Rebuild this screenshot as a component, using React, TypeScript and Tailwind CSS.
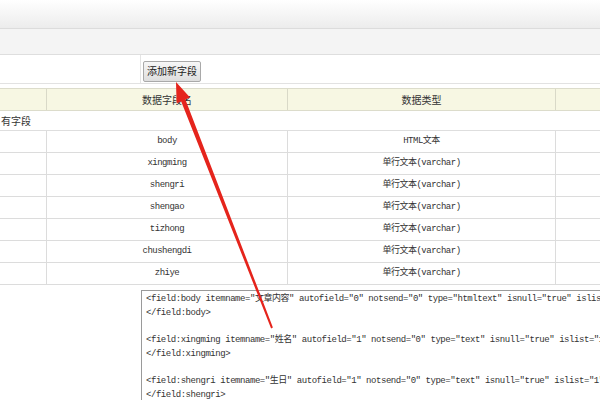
// Field list page — data field table with XML template textarea

const rows = [
    { name: 'body', type: 'HTML文本' },
    { name: 'xingming', type: '单行文本(varchar)' },
    { name: 'shengri', type: '单行文本(varchar)' },
    { name: 'shengao', type: '单行文本(varchar)' },
    { name: 'tizhong', type: '单行文本(varchar)' },
    { name: 'chushengdi', type: '单行文本(varchar)' },
    { name: 'zhiye', type: '单行文本(varchar)' },
];

const codeLines = [
    '<field:body itemname="文章内容" autofield="0" notsend="0" type="htmltext" isnull="true" islist="1" default="" maxlength="" page="split">',
    '</field:body>',
    '',
    '<field:xingming itemname="姓名" autofield="1" notsend="0" type="text" isnull="true" islist="1" default="" maxlength="250" page="">',
    '</field:xingming>',
    '',
    '<field:shengri itemname="生日" autofield="1" notsend="0" type="text" isnull="true" islist="1" default="" maxlength="250" page="">',
    '</field:shengri>',
];

const cjk = 'font-["Noto_Sans_CJK_SC",sans-serif]';
const mono = 'font-["Liberation_Mono","Noto_Sans_CJK_SC",monospace]';

export default function App() {
    return (
        <div className="relative w-[600px] h-[400px] overflow-hidden bg-white text-[#333]">
            {/* Top bars */}
            <div className="h-[29px] border-b border-[#dcdcdc] bg-gradient-to-b from-white to-[#ececec]" />
            <div className="h-[26px] border-b border-[#dedede] bg-[#f4f4f4]" />

            {/* Button row */}
            <div className="h-[29px] border-b border-[#e2e2e2] flex">
                <div className="w-[141px] border-r border-[#e4e4e4]" />
                <div className="pl-[2px] pt-[2px]">
                    <button
                        className={`h-[21px] w-[58px] rounded-[2px] border border-[#a9a9a9] bg-gradient-to-b from-[#f7f7f7] to-[#dedede] text-[10px] leading-none text-[#222] ${cjk}`}
                    >
                        添加新字段
                    </button>
                </div>
            </div>

            <div className="h-[4px]" />

            {/* Header */}
            <div className={`h-[23px] border-y border-[#dcdccb] bg-[#f7f7e3] flex text-[10px] ${cjk}`}>
                <div className="w-[47px] border-r border-[#d9d9c8]" />
                <div className="w-[241px] border-r border-[#d9d9c8] flex items-center justify-center">数据字段名</div>
                <div className="w-[268px] border-r border-[#d9d9c8] flex items-center justify-center">数据类型</div>
                <div className="flex-1" />
            </div>

            {/* Section label */}
            <div className={`h-[20px] border-b border-[#dedede] flex items-center pl-[1px] text-[10px] ${cjk}`}>
                有字段
            </div>

            {/* Data rows */}
            {rows.map((row) => (
                <div key={row.name} className="h-[22px] border-b border-[#dcdcdc] flex text-[9px]">
                    <div className="w-[47px] border-r border-[#dcdcdc]" />
                    <div className={`w-[241px] border-r border-[#dcdcdc] flex items-center justify-center tracking-[-0.5px] ${mono}`}>
                        {row.name}
                    </div>
                    <div className={`w-[268px] border-r border-[#dcdcdc] flex items-center justify-center tracking-[-0.5px] ${mono}`}>
                        {row.type}
                    </div>
                    <div className="flex-1" />
                </div>
            ))}

            <div className="h-[5px]" />

            {/* Template textarea */}
            <div className="flex h-[110px]">
                <div className="w-[141px]" />
                <div className="flex-1 border-l border-t border-[#9a9a9a] pl-[4px] pt-[2px] overflow-hidden">
                    {codeLines.map((line, i) => (
                        <div
                            key={i}
                            className={`h-[13.7px] leading-[13.7px] whitespace-pre text-[9px] tracking-[-0.45px] ${mono}`}
                        >
                            {line}
                        </div>
                    ))}
                </div>
            </div>

            {/* Red annotation arrow */}
            <svg className="absolute left-0 top-0 pointer-events-none" width="600" height="400" viewBox="0 0 600 400">
                <polygon
                    points="176,82 190,97.5 185.4,99.6 272.9,327.6 271.1,328.4 181.2,101.4 176.6,103.3"
                    fill="#e5241c"
                />
            </svg>
        </div>
    );
}
